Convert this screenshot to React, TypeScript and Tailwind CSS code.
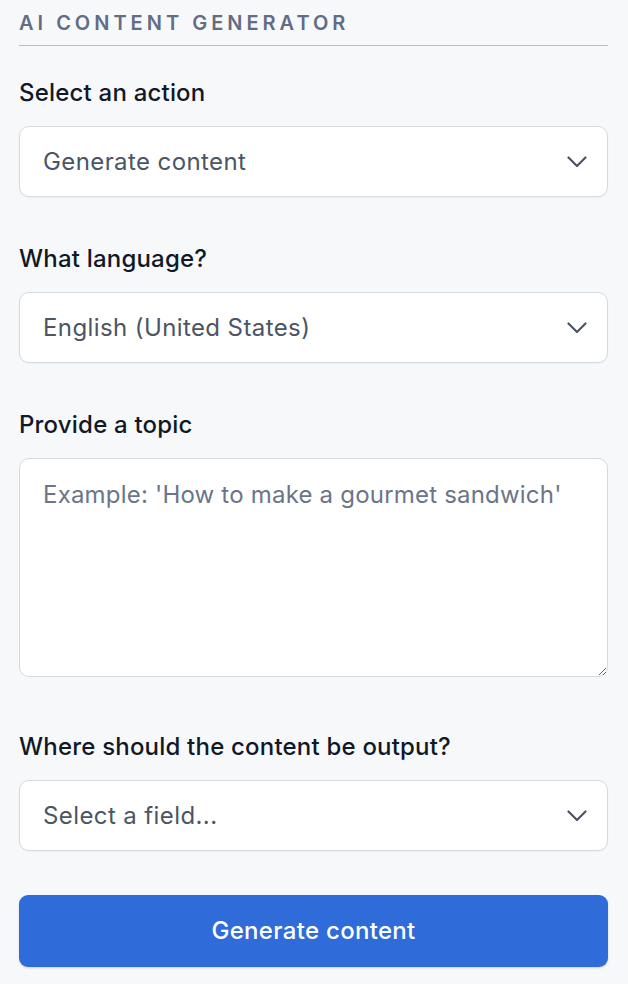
const Chevron = () => (
  <svg width="20" height="12" viewBox="0 0 20 12" fill="none" className="shrink-0">
    <path d="M1.5 1.5 L10 10 L18.5 1.5" stroke="#4b5563" strokeWidth="2.2" strokeLinecap="round" strokeLinejoin="round" />
  </svg>
);

const Field = ({ label, className, children }: { label: string; className?: string; children: React.ReactNode }) => (
  <div className={className}>
    <label className="block text-[24px] font-medium leading-8 tracking-[0.2px] text-[#111827]">{label}</label>
    <div className="mt-[17px]">{children}</div>
  </div>
);

const SelectBox = ({ value }: { value: string }) => (
  <div className="flex h-[71px] items-center justify-between rounded-[10px] border border-[#d5d9e0] bg-white pl-[23px] pr-[20px] shadow-[0_1px_2px_rgba(0,0,0,0.04)]">
    <span className="text-[24px] tracking-[0.4px] text-[#4b5563]">{value}</span>
    <Chevron />
  </div>
);

export default function App() {
  return (
    <div className="min-h-[984px] bg-[#f7f8fa] pl-[19px] pr-[20px] pt-[9px] font-['Inter','Liberation_Sans',sans-serif]">
      <div className="border-b border-[#b6bfcb] pb-2">
        <h2 className="text-[20px] font-semibold uppercase leading-7 tracking-[0.2em] text-[#626c84]">AI Content Generator</h2>
      </div>

      <Field label="Select an action" className="mt-[31px]">
        <SelectBox value="Generate content" />
      </Field>

      <Field label="What language?" className="mt-[46px]">
        <SelectBox value="English (United States)" />
      </Field>

      <Field label="Provide a topic" className="mt-[46px]">
        <textarea
          placeholder="Example: 'How to make a gourmet sandwich'"
          className="block h-[219px] w-full rounded-[10px] border border-[#d5d9e0] bg-white px-[23px] pt-[20px] text-[24px] leading-8 tracking-[0.2px] text-[#4b5563] outline-none placeholder:text-[#6b7589]"
        />
      </Field>

      <Field label="Where should the content be output?" className="mt-[54px]">
        <SelectBox value="Select a field..." />
      </Field>

      <button className="mt-[44px] flex h-[72px] w-full items-center justify-center rounded-[9px] bg-[#2f6cd9] text-[24px] font-medium tracking-[0.3px] text-white shadow-[0_1px_2px_rgba(0,0,0,0.15)]">
        Generate content
      </button>
    </div>
  );
}
